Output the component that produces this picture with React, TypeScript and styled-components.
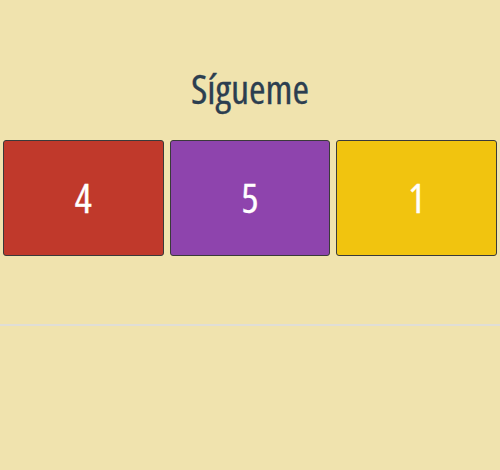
import React from "react";
import styled, { createGlobalStyle } from "styled-components";

const GlobalStyle = createGlobalStyle`
  html, body { margin: 0; padding: 0; }
  body {
    background: #f0e3ae;
    font-family: 'Open Sans', 'Noto Sans', sans-serif;
    font-stretch: 75%;
  }
`;

const Page = styled.main`
  display: flex;
  flex-direction: column;
  padding-top: 69px;
`;

const Title = styled.h1`
  margin: 0;
  font-size: 40px;
  line-height: 39px;
  font-weight: 400;
  font-stretch: 75%;
  text-align: center;
  color: #2c3e50;
  -webkit-text-stroke: 0.3px #2c3e50;
`;

const Row = styled.section`
  display: flex;
  gap: 6px;
  padding: 0 3px;
  margin-top: 32px;
`;

const Card = styled.div<{ $bg: string }>`
  flex: 1;
  height: 116px;
  box-sizing: border-box;
  border: 1px solid #3a3a3a;
  border-radius: 3px;
  background: ${(p) => p.$bg};
  color: #ffffff;
  display: flex;
  align-items: center;
  justify-content: center;
  font-size: 40px;
  font-stretch: 75%;
  line-height: 1;
  -webkit-text-stroke: 0.3px #ffffff;
`;

const Divider = styled.hr`
  margin: 68px 0 0;
  border: 0;
  border-top: 2px solid #e0ded6;
  height: 0;
`;

const cards = [
  { n: 4, bg: "#c0392b" },
  { n: 5, bg: "#8e44ad" },
  { n: 1, bg: "#f1c40f" },
];

export default function App() {
  return (
    <>
      <GlobalStyle />
      <Page>
        <Title>Sígueme</Title>
        <Row>
          {cards.map((c) => (
            <Card key={c.bg} $bg={c.bg}>
              {c.n}
            </Card>
          ))}
        </Row>
        <Divider />
      </Page>
    </>
  );
}
